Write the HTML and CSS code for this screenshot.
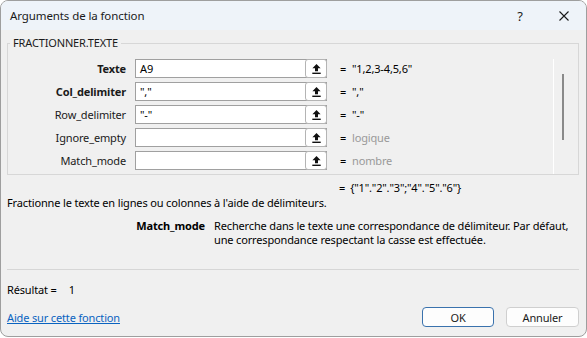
FILE: index.html
```html
<!DOCTYPE html>
<html lang="fr">
<head>
<meta charset="utf-8">
<title>Arguments de la fonction</title>
<link rel="stylesheet" href="styles.css">
</head>
<body>
<div class="win">
  <div class="titlebar">
    <span class="title">Arguments de la fonction</span>
    <span class="help">?</span>
    <span class="close"><svg width="10" height="10" viewBox="0 0 10 10"><path d="M0.5 0.5 L9.5 9.5 M9.5 0.5 L0.5 9.5" stroke="#1a1a1a" stroke-width="1.1" fill="none"/></svg></span>
  </div>
  <div class="body">
    <fieldset class="group">
      <legend>FRACTIONNER.TEXTE</legend>
      <div class="group-inner">
        <div class="args">
          <div class="lbl req">Texte</div>
          <div class="field"><span class="inp">A9</span><span class="ref"><svg width="9" height="10" viewBox="0 0 9 10"><path d="M4.5 0 L8.6 4.3 H6 V7.3 H3 V4.3 H0.4 Z" fill="#111"/><rect x="0.3" y="8.6" width="8.4" height="1.4" fill="#111"/></svg></span></div>
          <div class="eq">=</div>
          <div class="val">"1,2,3-4,5,6"</div>

          <div class="lbl req">Col_delimiter</div>
          <div class="field"><span class="inp">","</span><span class="ref"><svg width="9" height="10" viewBox="0 0 9 10"><path d="M4.5 0 L8.6 4.3 H6 V7.3 H3 V4.3 H0.4 Z" fill="#111"/><rect x="0.3" y="8.6" width="8.4" height="1.4" fill="#111"/></svg></span></div>
          <div class="eq">=</div>
          <div class="val">","</div>

          <div class="lbl">Row_delimiter</div>
          <div class="field"><span class="inp">"-"</span><span class="ref"><svg width="9" height="10" viewBox="0 0 9 10"><path d="M4.5 0 L8.6 4.3 H6 V7.3 H3 V4.3 H0.4 Z" fill="#111"/><rect x="0.3" y="8.6" width="8.4" height="1.4" fill="#111"/></svg></span></div>
          <div class="eq">=</div>
          <div class="val">"-"</div>

          <div class="lbl">Ignore_empty</div>
          <div class="field"><span class="inp"></span><span class="ref"><svg width="9" height="10" viewBox="0 0 9 10"><path d="M4.5 0 L8.6 4.3 H6 V7.3 H3 V4.3 H0.4 Z" fill="#111"/><rect x="0.3" y="8.6" width="8.4" height="1.4" fill="#111"/></svg></span></div>
          <div class="eq">=</div>
          <div class="val hint">logique</div>

          <div class="lbl">Match_mode</div>
          <div class="field"><span class="inp"></span><span class="ref"><svg width="9" height="10" viewBox="0 0 9 10"><path d="M4.5 0 L8.6 4.3 H6 V7.3 H3 V4.3 H0.4 Z" fill="#111"/><rect x="0.3" y="8.6" width="8.4" height="1.4" fill="#111"/></svg></span></div>
          <div class="eq">=</div>
          <div class="val hint">nombre</div>
        </div>
        <div class="vscroll"><div class="thumb"></div></div>
      </div>
    </fieldset>
    <div class="total"><span class="teq">=</span><span>{"1"."2"."3";"4"."5"."6"}</span></div>
    <div class="desc">Fractionne le texte en lignes ou colonnes à l'aide de délimiteurs.</div>
    <div class="argdesc">
      <div class="argname">Match_mode</div>
      <div class="argtext">Recherche dans le texte une correspondance de délimiteur. Par défaut,<br>une correspondance respectant la casse est effectuée.</div>
    </div>
    <div class="sep"></div>
    <div class="result"><span>Résultat =</span><span class="rval">1</span></div>
    <div class="footer">
      <a class="help-link" href="#">Aide sur cette fonction</a>
      <div class="buttons">
        <span class="btn default">OK</span>
        <span class="btn">Annuler</span>
      </div>
    </div>
  </div>
</div>
</body>
</html>
```

FILE: styles.css
```css
* { box-sizing: border-box; }
html, body { margin: 0; padding: 0; background: #ffffff; }
body {
  font-family: "Noto Sans", "Segoe UI", sans-serif;
  font-size: 11px;
  letter-spacing: -0.15px;
  color: #000;
}
.win {
  width: 587px;
  height: 337px;
  border: 1px solid #9e9e9e;
  border-radius: 8px;
  overflow: hidden;
  background: #f0f0f0;
  display: flex;
  flex-direction: column;
}
.titlebar {
  height: 29px;
  flex: none;
  background: #eef3f9;
  display: flex;
  align-items: center;
  padding-left: 9px;
}
.title { flex: 1; font-size: 11.5px; letter-spacing: -0.1px; color: #1a1a1a; }
.help { width: 12px; text-align: center; font-size: 13px; margin-right: 33px; color: #1a1a1a; }
.close { width: 10px; height: 10px; display: flex; margin-right: 17px; }
.body {
  flex: 1;
  padding: 0 7px 0 6px;
  display: flex;
  flex-direction: column;
}
.group {
  margin: 6px 0 0 0;
  padding: 9px 0 4px 0;
  border: 1px solid #d7d7d7;
  border-radius: 0;
  min-width: 0;
}
.group legend {
  padding: 0 3px;
  margin-left: 2px;
  line-height: 14px;
  color: #1a1a1a;
}
.group-inner { display: flex; }
.args {
  display: grid;
  grid-template-columns: 127px 192px 25px 190px;
  grid-auto-rows: 19px;
  row-gap: 4px;
  align-items: center;
}
.lbl { text-align: right; padding-right: 9px; color: #1a1a1a; white-space: nowrap; }
.lbl.req { font-weight: 700; }
.field {
  height: 19px;
  display: flex;
  border: 1px solid #a0a0a0;
  background: #fff;
}
.inp { flex: 1; padding-left: 4px; line-height: 17px; white-space: nowrap; }
.ref {
  width: 22px;
  height: 19px;
  margin: -1px -1px -1px 0;
  border: 1px solid #b4b4b4;
  border-radius: 3px;
  background: #fff;
  display: flex;
  align-items: center;
  justify-content: center;
}
.eq { padding-left: 13px; }
.val { white-space: nowrap; }
.hint { color: #999; }
.vscroll {
  margin-left: auto;
  width: 25px;
  margin-bottom: -4px;
  border-left: 1px solid #ffffff;
  padding: 15px 0 0 8px;
}
.thumb { width: 2px; height: 66px; background: #8a8a8a; }
.total { margin-top: 6px; line-height: 14px; padding-left: 332px; }
.teq { margin-right: 5px; }
.desc { margin-top: 1px; line-height: 14px; }
.argdesc {
  margin-top: 9px;
  display: grid;
  grid-template-columns: 198px 1fr;
  column-gap: 9px;
  line-height: 14px;
}
.argname { text-align: right; font-weight: 700; }
.argtext { white-space: nowrap; }
.sep { margin-top: 22px; height: 1px; background: #d6d6d6; }
.result { margin-top: 13px; line-height: 14px; display: flex; }
.rval { margin-left: 12px; }
.footer {
  margin-top: 10px;
  display: flex;
  align-items: center;
  justify-content: space-between;
}
.help-link { color: #0a63c0; text-decoration: underline; }
.buttons { display: flex; gap: 12px; }
.btn {
  width: 72px;
  height: 20px;
  border: 1px solid #cfcfcf;
  border-radius: 4px;
  background: #fdfdfd;
  display: flex;
  align-items: center;
  justify-content: center;
  color: #1a1a1a;
}
.btn + .btn { width: 73px; }
.btn.default { border-color: #3a72ad; }
```
